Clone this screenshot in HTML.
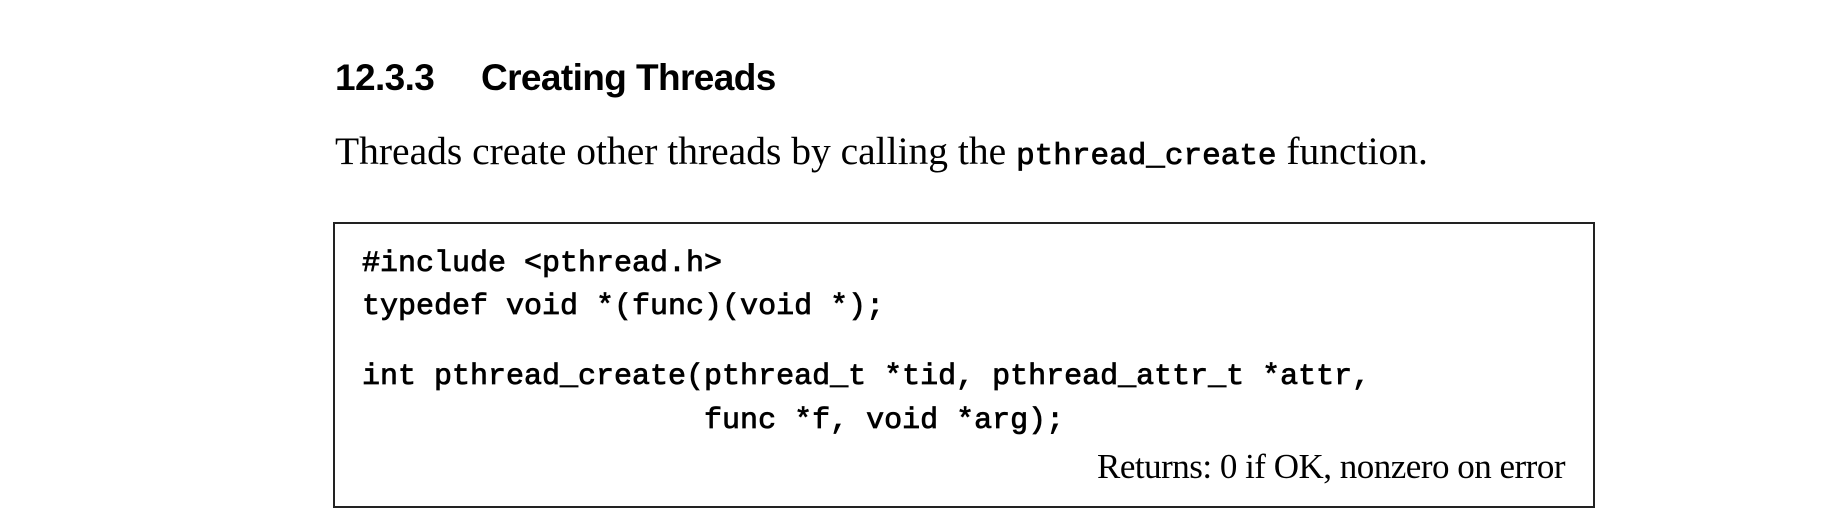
<!DOCTYPE html>
<html><head><style>
body{margin:0;width:1832px;height:530px;background:#fff;position:relative;overflow:hidden;color:#000}
.a{position:absolute;white-space:pre;line-height:1}
.h{font-family:"Liberation Sans",sans-serif;font-weight:bold;font-size:37px;letter-spacing:-0.6px}
.t{font-family:"Liberation Serif",serif;font-size:39.5px}
.m{font-family:"Liberation Mono",monospace;font-size:30px;font-weight:normal;-webkit-text-stroke:0.8px #000}
.box{position:absolute;left:333px;top:222px;width:1262px;height:286px;border:2px solid #222;box-sizing:border-box}
</style></head><body>
<div class="a h" style="left:335px;top:59px">12.3.3</div>
<div class="a h" style="left:481px;top:59px">Creating Threads</div>
<div class="a t" style="left:335px;top:132px">Threads create other threads by calling the <span class="m" style="font-size:31px">pthread_create</span> function.</div>
<div class="box"></div>
<div class="a m" style="left:362px;top:249px">#include &lt;pthread.h&gt;</div>
<div class="a m" style="left:362px;top:292px">typedef void *(func)(void *);</div>
<div class="a m" style="left:362px;top:362px">int pthread_create(pthread_t *tid, pthread_attr_t *attr,</div>
<div class="a m" style="left:362px;top:406px">                   func *f, void *arg);</div>
<div class="a t" style="right:267px;top:449px;font-size:35px;letter-spacing:-0.5px">Returns: 0 if OK, nonzero on error</div>
</body></html>
